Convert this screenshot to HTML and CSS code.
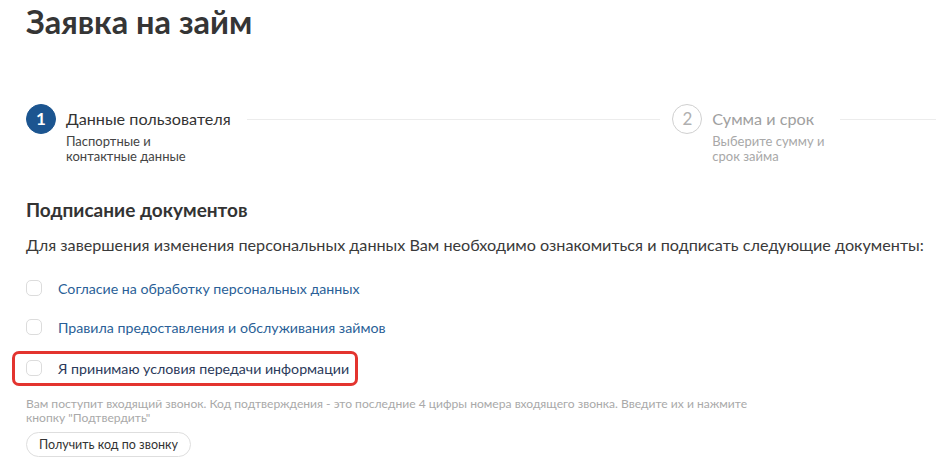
FILE: index.html
```html
<!DOCTYPE html>
<html lang="ru">
<head>
<meta charset="utf-8">
<title>Заявка на займ</title>
<link rel="stylesheet" href="styles.css">
</head>
<body>
<main class="page">
  <h1 class="page-title">Заявка на займ</h1>

  <div class="steps">
    <div class="step step--active">
      <div class="step-num">1</div>
      <div class="step-text">
        <div class="step-title">Данные пользователя</div>
        <div class="step-sub">Паспортные и<br>контактные данные</div>
      </div>
    </div>
    <div class="step-line"></div>
    <div class="step">
      <div class="step-num">2</div>
      <div class="step-text">
        <div class="step-title">Сумма и срок</div>
        <div class="step-sub">Выберите сумму и<br>срок займа</div>
      </div>
    </div>
    <div class="step-line"></div>
  </div>

  <section class="docs">
    <h2 class="docs-title">Подписание документов</h2>
    <p class="docs-lead">Для завершения изменения персональных данных Вам необходимо ознакомиться и подписать следующие документы:</p>

    <ul class="doc-list">
      <li class="doc-row"><span class="checkbox"></span><a class="doc-link" href="#">Согласие на обработку персональных данных</a></li>
      <li class="doc-row"><span class="checkbox"></span><a class="doc-link" href="#">Правила предоставления и обслуживания займов</a></li>
      <li class="doc-row doc-row--highlight"><span class="checkbox"></span><span class="doc-text">Я принимаю условия передачи информации</span></li>
    </ul>

    <p class="hint">Вам поступит входящий звонок. Код подтверждения - это последние 4 цифры номера входящего звонка. Введите их и нажмите кнопку "Подтвердить"</p>

    <button class="call-btn" type="button">Получить код по звонку</button>
  </section>
</main>
</body>
</html>
```
FILE: styles.css
```css
* { box-sizing: border-box; }

html, body {
  margin: 0;
  padding: 0;
  background: #fff;
  overflow: hidden;
}

body {
  font-family: Lato, "Open Sans", sans-serif;
  color: #333;
}

.page {
  padding: 0 0 0 26px;
}

.page-title {
  margin: 0;
  padding-top: 2px;
  font-size: 32.5px;
  line-height: 40px;
  font-weight: 700;
  color: #353535;
}

.steps {
  display: flex;
  align-items: flex-start;
  width: 1240px;
  margin-top: 62px;
}

.step {
  display: flex;
  gap: 10px;
}

.step-num {
  width: 30px;
  height: 30px;
  border-radius: 50%;
  border: 1px solid #d0d0d0;
  color: #b0b0b0;
  font-size: 17px;
  line-height: 28px;
  text-align: center;
  flex: none;
}

.step--active .step-num {
  background: #1c5590;
  border-color: #1c5590;
  color: #fff;
  font-weight: 700;
}

.step-text {
  padding-top: 5px;
}

.step-title {
  font-size: 16.2px;
  line-height: 20px;
  color: #a0a0a0;
}

.step--active .step-title { color: #333; }

.step-sub {
  margin-top: 5px;
  font-size: 13px;
  line-height: 15px;
  color: #a8a8a8;
}

.step--active .step-sub { color: #444; }

.step-line {
  flex: 1;
  height: 1px;
  background: #ececec;
  margin: 15px 12px 0 16px;
}

.docs {
  margin-top: 34px;
}

.docs-title {
  margin: 0;
  font-size: 19px;
  line-height: 24px;
  font-weight: 700;
  color: #333;
}

.docs-lead {
  margin: 12px 0 0;
  font-size: 16.2px;
  line-height: 22px;
  color: #3a3a3a;
}

.doc-list {
  list-style: none;
  margin: 21px 0 0;
  padding: 0;
  display: flex;
  flex-direction: column;
  gap: 17px;
  align-items: flex-start;
}

.doc-row {
  display: flex;
  align-items: center;
  gap: 16px;
  height: 22px;
  font-size: 14.2px;
}

.checkbox {
  width: 16px;
  height: 16px;
  border: 1px solid #dcdcdc;
  border-radius: 5px;
  background: #fff;
  flex: none;
}

.doc-link {
  color: #2a5f97;
  text-decoration: none;
}

.doc-text { color: #2b3a5a; }

.doc-row--highlight {
  position: relative;
  margin-top: 2px;
}

.doc-row--highlight::before {
  content: "";
  position: absolute;
  left: -14px;
  right: -9px;
  top: -6px;
  bottom: -7px;
  border: 3px solid #e3342f;
  border-radius: 7px;
}

.hint {
  margin: 18px 0 0;
  width: 750px;
  font-size: 12.1px;
  line-height: 14px;
  color: #a9a9a9;
}

.call-btn {
  display: block;
  margin-top: 7px;
  height: 25px;
  padding: 0 12px;
  border: 1px solid #dedede;
  border-radius: 12.5px;
  background: #fff;
  font-family: inherit;
  font-size: 12.5px;
  color: #333;
}
```
